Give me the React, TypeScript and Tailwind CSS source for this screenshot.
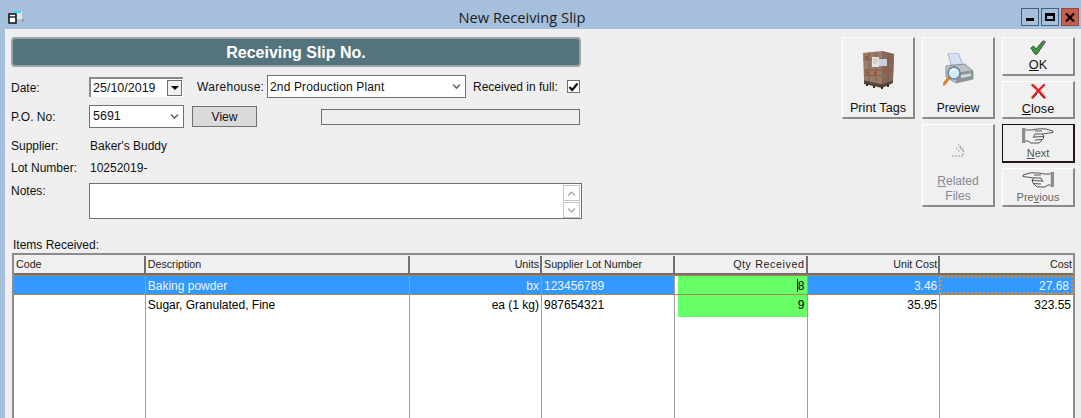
const FONT = "font-['Liberation_Sans',Arial,sans-serif]";

function Package() {
  return (
    <svg width="32" height="38" viewBox="0 0 32 38">
      <path d="M1 2 L20 0 L32 3 L31 29 L20 33 L2 29 Z" fill="#9c7a68" />
      <path d="M20 0 L32 3 L31 29 L20 33 Z" fill="#86685a" />
      <path d="M1 9 L20 8 M2 19 L20 19 M2 24 L20 25 M7 1 L7 30 M14 1 L14 31 M20 12 L31 10 M20 21 L31 19 M26 2 L26 31" stroke="#745648" strokeWidth="0.7" />
      <rect x="10" y="6" width="7" height="10" fill="#e6e3e1" />
      <path d="M11 8 H16 M11 10 H16 M11 12 H15" stroke="#a9a4a0" strokeWidth="0.6" />
      <rect x="17" y="8" width="8" height="7" fill="#c6d0da" />
      <rect x="3" y="5" width="3" height="3" fill="#b0522f" />
      <rect x="3" y="20" width="3" height="3" fill="#b0522f" />
      <rect x="12" y="21" width="3" height="3" fill="#b0522f" />
      <rect x="23" y="18" width="3" height="3" fill="#b0522f" />
      <rect x="27" y="6" width="3" height="3" fill="#b0522f" />
      <path d="M2 29 L20 33 L31 29 L31 32 L20 37 L2 33 Z" fill="#55453a" />
      <path d="M5 32 L5 35 M12 34 L12 37 M20 35 L20 38 M26 33 L26 36" stroke="#3a2c22" strokeWidth="2" />
    </svg>
  );
}

function Printer() {
  return (
    <svg width="31" height="33" viewBox="0 0 31 33">
      <path d="M5 0 L15 0 L20 12 L8 12 Z" fill="#d6e2f4" stroke="#93a5c0" strokeWidth="0.8" />
      <path d="M3 13 L22 11 L30 18 L30 26 L13 30 L3 24 Z" fill="#bcc1c6" stroke="#7e858d" strokeWidth="0.8" />
      <path d="M13 20 L30 17 L30 26 L13 30 Z" fill="#8f959c" />
      <path d="M18 22 L28 20.5 L28 23 L18 25 Z" fill="#d9dcdf" />
      <circle cx="27" cy="19" r="0.9" fill="#5fd05f" />
      <path d="M6 25 L1 31" stroke="#e0812f" strokeWidth="3" strokeLinecap="round" />
      <circle cx="11" cy="20" r="6" fill="#cfeafb" stroke="#6f8296" strokeWidth="1.5" />
      <path d="M8 19 A3.5 3.5 0 0 1 12 16.5" stroke="#fff" strokeWidth="1.3" fill="none" />
    </svg>
  );
}

function Check() {
  return (
    <svg width="16" height="15" viewBox="0 0 16 15">
      <path d="M0.8 8 L3.5 6 L6 9 L13 0.8 L15.5 1.8 L7 14.2 L5 14.2 Z" fill="#3c9a3c" stroke="#2c4f3a" strokeWidth="0.9" />
      <path d="M13 0.8 L15.5 1.8 L11 7 Z" fill="#8a5ea8" />
    </svg>
  );
}

function RedX() {
  return (
    <svg width="15" height="15" viewBox="0 0 15 15">
      <path d="M1.5 1 C5 4 8 7 13.5 13.5 M13 1 C9 5 5 9 1.5 13.5" stroke="#e8211c" strokeWidth="2.4" fill="none" strokeLinecap="round" />
      <path d="M6 10 L2 14 M9 10 L13 14" stroke="#3a2020" strokeWidth="0.8" />
    </svg>
  );
}

function Hand({ flip, color }: { flip?: boolean; color: string }) {
  return (
    <svg width="32" height="16" viewBox="0 0 32 16" className={flip ? "-scale-x-100" : ""}>
      <rect x="0" y="0" width="3.5" height="15" fill="#8b8f8b" />
      <path d="M3.5 2 L10 2 C14 1 18 0.5 24 1 L31 3 L31 4.5 L20 6 L22 8 L21 11 L19 13 L17 15 L9 15 L6 13 L3.5 13" fill="#f0f0f0" stroke={color} strokeWidth="1" />
      <path d="M13 6 L20 6 M12 9 L22 8.5 M13 12 L21 11.5 M13 6 L11 10 M13 3 L20 3" stroke={color} strokeWidth="1" fill="none" />
    </svg>
  );
}

function RaisedButton({ className, children }: { className: string; children: React.ReactNode }) {
  return (
    <div className={`flex flex-col items-center border-t border-l border-t-white border-l-white border-r-2 border-b-2 border-r-[#8a8a8a] border-b-[#8a8a8a] bg-[#f0f0f0] ${className}`}>
      {children}
    </div>
  );
}

function Chevron({ light }: { light?: boolean }) {
  return (
    <svg width="9" height="7" viewBox="0 0 9 7" className="shrink-0">
      <path d="M1 1.5 L4.5 5 L8 1.5" stroke={light ? "#a0a0a0" : "#6a6a6a"} strokeWidth={light ? 1.1 : 1.6} fill="none" />
    </svg>
  );
}

const columns = [
  { name: "Code", w: "w-[132px]", right: false },
  { name: "Description", w: "w-[265px]", right: false },
  { name: "Units", w: "w-[132px]", right: true },
  { name: "Supplier Lot Number", w: "w-[133px]", right: false },
  { name: "Qty Received", w: "w-[133px]", right: true },
  { name: "Unit Cost", w: "w-[133px]", right: true },
  { name: "Cost", w: "w-[133px]", right: true },
];

function Row({ cells, selected }: { cells: string[]; selected?: boolean }) {
  return (
    <div className={`flex ${selected ? "h-[20px] bg-[#3399ff] text-[#eaf4ff] border-y border-dotted border-y-[#b58a5a]" : "h-[22px] text-black"}`}>
      {cells.map((c, i) => {
        const col = columns[i];
        const green = i === 4;
        return (
          <div
            key={col.name}
            className={`relative flex ${selected ? "items-center pt-[1px]" : "items-start pt-[4px]"} ${col.w} ${col.right ? "justify-end pr-[2px]" : "pl-[2px]"} ${i < 6 ? "border-r border-r-[#a0a0a0]" : ""} ${green ? "border-l-[3px] border-l-white bg-[#66ff66] text-black" : ""} ${selected && i === 6 ? "border-2 border-dotted border-[#d98a3a]" : ""}`}
          >
            <span>{c}</span>
            {selected && green && <span className="absolute right-[9px] top-[3px] h-[13px] w-px bg-black" />}
          </div>
        );
      })}
    </div>
  );
}

export default function App() {
  return (
    <div className={`${FONT} h-[418px] w-[1081px] overflow-hidden bg-[#a6bfdc] text-[12px] text-[#111] leading-none`}>
      {/* title bar */}
      <div className="relative flex h-[29px] items-center justify-center pr-[37px] pt-[6px]">
        <svg width="16" height="14" viewBox="0 0 16 14" className="absolute left-[8px] top-[11px]">
          <rect x="5" y="0" width="9" height="8" fill="#dfe8ee" />
          <rect x="5" y="0" width="8" height="2" fill="#35e0e6" />
          <rect x="1" y="3" width="7" height="9" fill="#fff" stroke="#000" strokeWidth="1.4" />
          <path d="M1 6 H8" stroke="#000" strokeWidth="1.2" />
          <rect x="14" y="8" width="2" height="3" fill="#999" />
        </svg>
        <span className="font-['Open_Sans',sans-serif] text-[14.7px] text-[#1c1c1c]">New Receiving Slip</span>
        <div className="absolute right-[2px] top-[8px] flex gap-[2px]">
          <div className="flex h-[18px] w-[18px] items-end justify-center border border-[#47607c] pb-[4px]">
            <div className="h-[3px] w-[8px] bg-black" />
          </div>
          <div className="flex h-[18px] w-[18px] items-center justify-center border border-[#47607c]">
            <div className="h-[8px] w-[10px] border-2 border-t-[3px] border-black" />
          </div>
          <div className="flex h-[18px] w-[18px] items-center justify-center border border-[#8a4a3c] bg-[#c75d4a]">
            <svg width="10" height="9" viewBox="0 0 10 9">
              <path d="M1 0.5 L9 8.5 M9 0.5 L1 8.5" stroke="#000" strokeWidth="2.2" />
            </svg>
          </div>
        </div>
      </div>

      {/* window body */}
      <div className="ml-[5px] h-[389px] bg-[#efefef] pl-[6px] pt-[8px]">
        <div className="flex h-[182px]">
          {/* form */}
          <div className="flex w-[571px] flex-col">
            <div className="mr-px flex h-[31px] items-center justify-center rounded-[4px] border-2 border-[#9aa3a6] bg-[#53747c] pt-[1px] text-[16px] font-bold text-white">
              Receiving Slip No.
            </div>

            <div className="mt-[8px] flex h-[23px] items-center">
              <span className="w-[78px] pt-[2px]">Date:</span>
              <div className="flex h-[20px] w-[94px] items-center justify-between border-t-2 border-l-2 border-t-[#8a8a8a] border-l-[#8a8a8a] bg-white pl-[2px] pr-[1px] text-[12.5px]">
                <span className="pt-[1px]">25/10/2019</span>
                <div className="flex h-[16px] w-[15px] items-center justify-center border border-[#707070] bg-[#f0f0f0]">
                  <div className="h-0 w-0 border-x-[4px] border-t-[4px] border-x-transparent border-t-black" />
                </div>
              </div>
              <span className="ml-[14px] w-[70px] tracking-[0.3px]">Warehouse:</span>
              <div className="flex h-[23px] w-[199px] items-center justify-between border border-[#707070] bg-white pl-[2px] pr-[4px]">
                <span className="tracking-[0.15px]">2nd Production Plant</span>
                <Chevron />
              </div>
              <span className="ml-[7px] w-[94px]">Received in full:</span>
              <div className="flex h-[13px] w-[13px] items-center justify-center border border-[#707070] bg-white">
                <svg width="11" height="10" viewBox="0 0 11 10">
                  <path d="M1.5 5 L4.2 8 L9.5 1.5" stroke="#111" strokeWidth="2.2" fill="none" />
                </svg>
              </div>
            </div>

            <div className="mt-[7px] flex h-[23px] items-center">
              <span className="w-[78px]">P.O. No:</span>
              <div className="flex h-[23px] w-[95px] items-center justify-between border border-[#707070] bg-white pl-[3px] pr-[4px] text-[12.5px]">
                <span>5691</span>
                <Chevron />
              </div>
              <div className="ml-[8px] flex h-[21px] w-[65px] items-center justify-center border border-[#707070] bg-[#dadada]">View</div>
              <div className="ml-[64px] h-[16px] w-[259px] border border-[#707070]" />
            </div>

            <div className="mt-[10px] flex h-[14px] items-center pt-[2px]">
              <span className="w-[79px]">Supplier:</span>
              <span>Baker's Buddy</span>
            </div>
            <div className="mt-[8px] flex h-[14px] items-center pt-[2px]">
              <span className="w-[79px]">Lot Number:</span>
              <span>10252019-</span>
            </div>
            <div className="mt-[9px] flex">
              <span className="w-[78px] pt-[2px]">Notes:</span>
              <div className="flex h-[36px] w-[493px] justify-end border border-[#707070] bg-white pr-[1px] pt-[1px]">
                <div className="flex w-[17px] flex-col gap-[1px]">
                  <div className="flex h-[16px] items-center justify-center border border-[#c4c4c4]">
                    <div className="rotate-180"><Chevron light /></div>
                  </div>
                  <div className="flex h-[16px] items-center justify-center border border-[#c4c4c4]">
                    <Chevron light />
                  </div>
                </div>
              </div>
            </div>
          </div>

          {/* buttons */}
          <div className="ml-[260px] grid h-[170px] grid-cols-[73px_73px_73px] grid-rows-[39px_38px_39px_39px] gap-x-[7px] gap-y-[5px]">
            <RaisedButton className="col-start-1 row-start-1 row-span-2 justify-between pb-[2px] pt-[13px]">
              <Package />
              <span className="text-[12.7px]">Print Tags</span>
            </RaisedButton>
            <RaisedButton className="col-start-2 row-start-1 row-span-2 justify-between pb-[3px] pt-[15px]">
              <Printer />
              <span>Preview</span>
            </RaisedButton>
            <RaisedButton className="col-start-3 row-start-1 justify-between pb-[2px] pt-[2px]">
              <Check />
              <span className="text-[12.7px]"><span className="underline">O</span>K</span>
            </RaisedButton>
            <RaisedButton className="col-start-3 row-start-2 justify-between pb-[1px] pt-[2px]">
              <RedX />
              <span className="text-[12.7px]"><span className="underline">C</span>lose</span>
            </RaisedButton>
            <RaisedButton className="col-start-2 row-start-3 row-span-2 pt-[18px] text-[#7f8894]">
              <svg width="14" height="14" viewBox="0 0 14 14">
                <path d="M1 13 H12 L12.5 6 L7 1 M7 3 L11 7 M5 5 L9 9 M9 4 L12 8" stroke="#9a9a9a" strokeWidth="1" fill="none" strokeDasharray="2 1" />
              </svg>
              <span className="mt-[17px] text-center leading-[15px]"><span className="underline">R</span>elated<br />Files</span>
            </RaisedButton>
            <div className="col-start-3 row-start-3 flex flex-col items-center justify-between border border-[#1a0a0a] border-r-2 border-b-2 border-r-[#2a1414] border-b-[#2a1414] bg-[#f0f0f0] pb-[2px] pt-[3px] text-[11px] text-[#555]">
              <Hand color="#555" />
              <span><span className="underline">N</span>ext</span>
            </div>
            <RaisedButton className="col-start-3 row-start-4 justify-between pb-[2px] pt-[3px] text-[11px] text-[#666]">
              <Hand flip color="#555" />
              <span>Pre<span className="underline">v</span>ious</span>
            </RaisedButton>
          </div>
        </div>

        <div className="ml-[2px] mt-[20px] h-[13px]">Items Received:</div>

        {/* grid */}
        <div className="ml-px mt-[1px] h-[165px] w-[1063px] border-l-2 border-t-2 border-r-2 border-[#8c8c8c] bg-white text-[12px]">
          <div className="flex h-[20px] border-b-2 border-b-[#707070] bg-[#f0f0f0] pt-[1px] text-[10.7px] text-[#222]">
            {columns.map((c, i) => (
              <div key={c.name} className={`flex items-center ${c.w} ${c.right ? "justify-end pr-[1px]" : "pl-[2px]"} ${i === 4 ? "tracking-[0.6px]" : ""} ${i < 6 ? "border-r-2 border-r-[#707070]" : ""}`}>
                {c.name}
              </div>
            ))}
          </div>
          <Row selected cells={["", "Baking powder", "bx", "123456789", "8", "3.46", "27.68"]} />
          <Row cells={["", "Sugar, Granulated, Fine", "ea (1 kg)", "987654321", "9", "35.95", "323.55"]} />
          <div className="flex h-[110px]">
            {columns.map((c, i) => (
              <div key={c.name} className={`${c.w} ${i < 6 ? "border-r border-r-[#a0a0a0]" : ""}`} />
            ))}
          </div>
        </div>
      </div>
    </div>
  );
}
